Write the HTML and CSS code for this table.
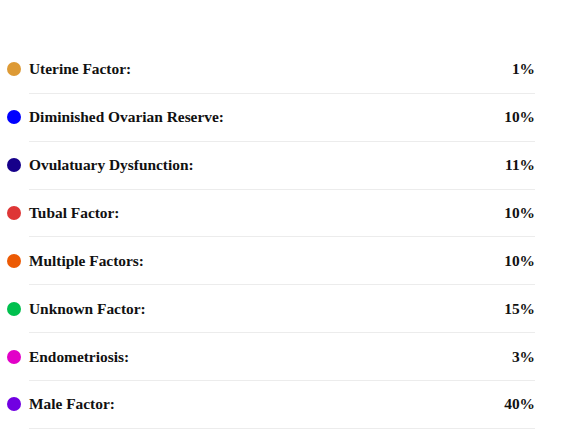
FILE: index.html
```html
<!DOCTYPE html>
<html>
<head>
<meta charset="utf-8">
<link rel="stylesheet" href="styles.css">
</head>
<body>
<ul class="legend">
  <li class="row"><span class="dot c1"></span><div class="info"><span class="label">Uterine Factor:</span><span class="value">1%</span></div></li>
  <li class="row"><span class="dot c2"></span><div class="info"><span class="label">Diminished Ovarian Reserve:</span><span class="value">10%</span></div></li>
  <li class="row"><span class="dot c3"></span><div class="info"><span class="label">Ovulatuary Dysfunction:</span><span class="value">11%</span></div></li>
  <li class="row"><span class="dot c4"></span><div class="info"><span class="label">Tubal Factor:</span><span class="value">10%</span></div></li>
  <li class="row"><span class="dot c5"></span><div class="info"><span class="label">Multiple Factors:</span><span class="value">10%</span></div></li>
  <li class="row"><span class="dot c6"></span><div class="info"><span class="label">Unknown Factor:</span><span class="value">15%</span></div></li>
  <li class="row"><span class="dot c7"></span><div class="info"><span class="label">Endometriosis:</span><span class="value">3%</span></div></li>
  <li class="row"><span class="dot c8"></span><div class="info"><span class="label">Male Factor:</span><span class="value">40%</span></div></li>
</ul>
</body>
</html>
```

FILE: styles.css
```css
html, body {
  margin: 0;
  padding: 0;
  background: #ffffff;
}
body {
  font-family: "Liberation Serif", "Times New Roman", serif;
  color: #111111;
}
.legend {
  list-style: none;
  margin: 0;
  padding: 46px 0 0 7px;
  width: 528px;
}
.row {
  display: flex;
  align-items: center;
  gap: 8px;
}
.dot {
  flex: none;
  width: 14px;
  height: 14px;
  border-radius: 50%;
  margin-bottom: 1px;
}
.info {
  flex: 1;
  display: flex;
  justify-content: space-between;
  align-items: center;
  height: 46.86px;
  border-bottom: 1px solid #ececec;
  font-size: 15.4px;
  font-weight: bold;
}
.c1 { background: #dd9a35; }
.c2 { background: #0000ff; }
.c3 { background: #16008a; }
.c4 { background: #de3636; }
.c5 { background: #ec5a04; }
.c6 { background: #00c04e; }
.c7 { background: #e200c8; }
.c8 { background: #7100e2; }
```
